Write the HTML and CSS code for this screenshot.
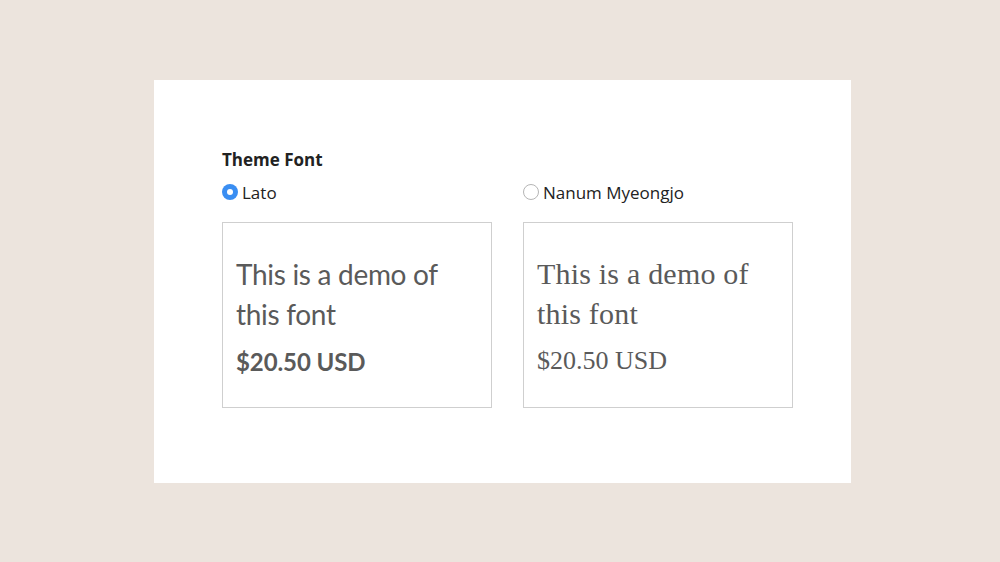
FILE: index.html
```html
<!DOCTYPE html>
<html lang="en">
<head>
  <meta charset="UTF-8" />
  <title>Theme Font</title>
  <link rel="stylesheet" href="styles.css">
</head>
<body>

  <div class="panel">
    <div class="font-picker">
      <div class="picker-title">Theme Font</div>

      <label class="font-option">
        <span class="radio checked"></span>
        <span class="option-name">Lato</span>
      </label>
      <label class="font-option">
        <span class="radio"></span>
        <span class="option-name">Nanum Myeongjo</span>
      </label>

      <div class="font-card sans">
        <p class="demo-text">This is a demo of this font</p>
        <p class="demo-price">$20.50 USD</p>
      </div>
      <div class="font-card serif">
        <p class="demo-text">This is a demo of this font</p>
        <p class="demo-price">$20.50 USD</p>
      </div>
    </div>
  </div>

</body>
</html>
```

FILE: styles.css
```css
body {
  margin: 0;
  padding-top: 80px;
  background-color: #ece4dd;
  font-family: "Open Sans", Arial, sans-serif;
  min-height: 562px;
  box-sizing: border-box;
}

.panel {
  margin-left: 154px;
  width: 697px;
  height: 403px;
  box-sizing: border-box;
  background: #fff;
  padding: 70px 58px 0 68px;
}

.font-picker {
  display: grid;
  grid-template-columns: 270px 270px;
  column-gap: 31px;
}

.picker-title {
  grid-column: 1 / 3;
  font-size: 17px;
  line-height: 20px;
  font-weight: 700;
  color: #222;
}

/* radio rows */
.font-option {
  display: flex;
  align-items: center;
  gap: 4px;
  margin-top: 12px;
  height: 20px;
  font-size: 17px;
  color: #222;
}
.radio {
  width: 16px;
  height: 16px;
  flex-shrink: 0;
  box-sizing: border-box;
  border-radius: 50%;
  border: 1px solid #b5b5b5;
  background: #fff;
  position: relative;
}
.radio.checked {
  border: none;
  background: #3a8ef2;
}
.radio.checked::after {
  content: "";
  position: absolute;
  top: 5px; left: 5px;
  width: 6px; height: 6px;
  border-radius: 50%;
  background: #fff;
}

/* demo cards */
.font-card {
  margin-top: 20px;
  height: 186px;
  box-sizing: border-box;
  border: 1px solid #cfcfcf;
  padding: 31px 13px 0 13px;
  color: #5a5a5a;
}
.font-card p {
  margin: 0;
}
.sans {
  font-family: Lato, sans-serif;
}
.sans .demo-text {
  font-size: 28px;
  line-height: 40px;
  letter-spacing: -0.3px;
}
.sans .demo-price {
  margin-top: 13px;
  font-size: 24px;
  line-height: 30px;
  font-weight: 700;
  letter-spacing: -0.1px;
}
.serif {
  font-family: "Liberation Serif", serif;
}
.serif .demo-text {
  font-size: 30px;
  line-height: 40px;
  letter-spacing: 0.2px;
}
.serif .demo-price {
  margin-top: 12px;
  font-size: 26px;
  line-height: 30px;
}
```
